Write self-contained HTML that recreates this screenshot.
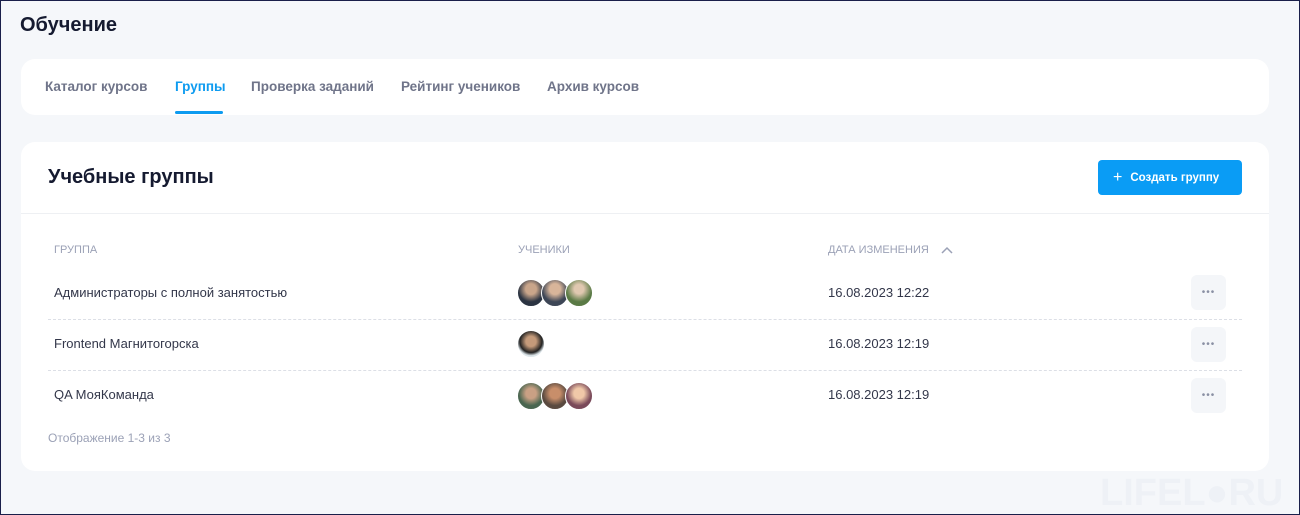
<!DOCTYPE html>
<html><head><meta charset="utf-8"><style>
*{box-sizing:border-box;margin:0;padding:0}
body{width:1300px;height:515px;background:#f5f7fa;font-family:"Liberation Sans",sans-serif;position:relative;overflow:hidden}
.abs{position:absolute}
h1{position:absolute;left:20px;top:14px;font-size:20px;font-weight:bold;color:#151a30}
.card{position:absolute;left:21px;width:1248px;background:#fff;border-radius:14px}
.tab{position:absolute;top:79px;font-size:13.5px;color:#6f7489;font-weight:bold}
.th{position:absolute;top:244px;font-size:11px;color:#9ba1b6;text-transform:uppercase}
.td{position:absolute;font-size:13px;color:#33374a}
.sep{position:absolute;left:48px;width:1194px;border-top:1px dashed #dcdfe6}
.dots{position:absolute;left:1191px;width:35px;height:35px;background:#f4f6f9;border-radius:6px;color:#8a90a4;font-size:10px;text-align:center;line-height:35px;letter-spacing:1px}
.av{position:absolute;width:28px;height:28px;border-radius:50%;border:1px solid #fff}
</style></head><body>
<h1>Обучение</h1>
<div class="card" style="top:59px;height:56px"></div>
<div class="tab" style="left:45px">Каталог курсов</div>
<div class="tab" style="left:175px;color:#0d9bf0">Группы</div>
<div class="abs" style="left:175px;top:111px;width:48px;height:3px;background:#0d9bf0;border-radius:2px"></div>
<div class="tab" style="left:251px">Проверка заданий</div>
<div class="tab" style="left:401px">Рейтинг учеников</div>
<div class="tab" style="left:547px">Архив курсов</div>

<div class="card" style="top:142px;height:329px"></div>
<div class="abs" style="left:48px;top:166px;font-size:20px;font-weight:bold;color:#151a30">Учебные группы</div>
<div class="abs" style="left:1098px;top:160px;width:144px;height:35px;background:#0a9cf5;border-radius:4px;color:#fff;font-size:11.5px;font-weight:bold;line-height:35px;padding-left:15px"><span style="font-size:16px;font-weight:normal;vertical-align:-1px;margin-right:8px">+</span>Создать группу</div>
<div class="abs" style="left:21px;top:213px;width:1248px;border-top:1px solid #eef0f3"></div>

<div class="th" style="left:54px">Группа</div>
<div class="th" style="left:518px">Ученики</div>
<div class="th" style="left:828px">Дата изменения</div>
<svg class="abs" style="left:941px;top:246px" width="12" height="8"><path d="M1 7L6 2L11 7" stroke="#9ba1b6" stroke-width="1.5" fill="none"/></svg>

<div class="td" style="left:54px;top:285px">Администраторы с полной занятостью</div>
<div class="td" style="left:828px;top:285px">16.08.2023 12:22</div>
<div class="av" style="left:517px;top:279px;background:radial-gradient(circle at 50% 35%,#c9a58a 25%,#2b3442 60%)"></div>
<div class="av" style="left:541px;top:279px;background:radial-gradient(circle at 50% 35%,#d8b59a 25%,#3d4656 60%)"></div>
<div class="av" style="left:565px;top:279px;background:radial-gradient(circle at 50% 35%,#e0c8b0 22%,#5a7a45 60%)"></div>
<div class="dots" style="top:275px">•••</div>
<div class="sep" style="top:319px"></div>

<div class="td" style="left:54px;top:336px">Frontend Магнитогорска</div>
<div class="td" style="left:828px;top:336px">16.08.2023 12:19</div>
<div class="av" style="left:517px;top:330px;background:radial-gradient(circle at 50% 40%,#c49a7a 25%,#222 55%,#dde6ea 70%)"></div>
<div class="dots" style="top:327px">•••</div>
<div class="sep" style="top:370px"></div>

<div class="td" style="left:54px;top:387px">QA МояКоманда</div>
<div class="td" style="left:828px;top:387px">16.08.2023 12:19</div>
<div class="av" style="left:517px;top:382px;background:radial-gradient(circle at 50% 40%,#c9a084 25%,#4a6650 60%)"></div>
<div class="av" style="left:541px;top:382px;background:radial-gradient(circle at 50% 40%,#c88e6a 25%,#5a4a40 60%)"></div>
<div class="av" style="left:565px;top:382px;background:radial-gradient(circle at 50% 40%,#f0c8a8 25%,#7a4a5a 60%)"></div>
<div class="dots" style="top:378px">•••</div>

<div class="abs" style="left:48px;top:431px;font-size:12px;color:#9ba1b6">Отображение 1-3 из 3</div>
<div class="abs" style="left:1100px;top:472px;font-size:38px;font-weight:bold;color:#eef1f6">LIFEL●RU</div>
<div class="abs" style="left:0;top:0;width:1300px;height:515px;border:1px solid #1a1f4a"></div>
</body></html>
